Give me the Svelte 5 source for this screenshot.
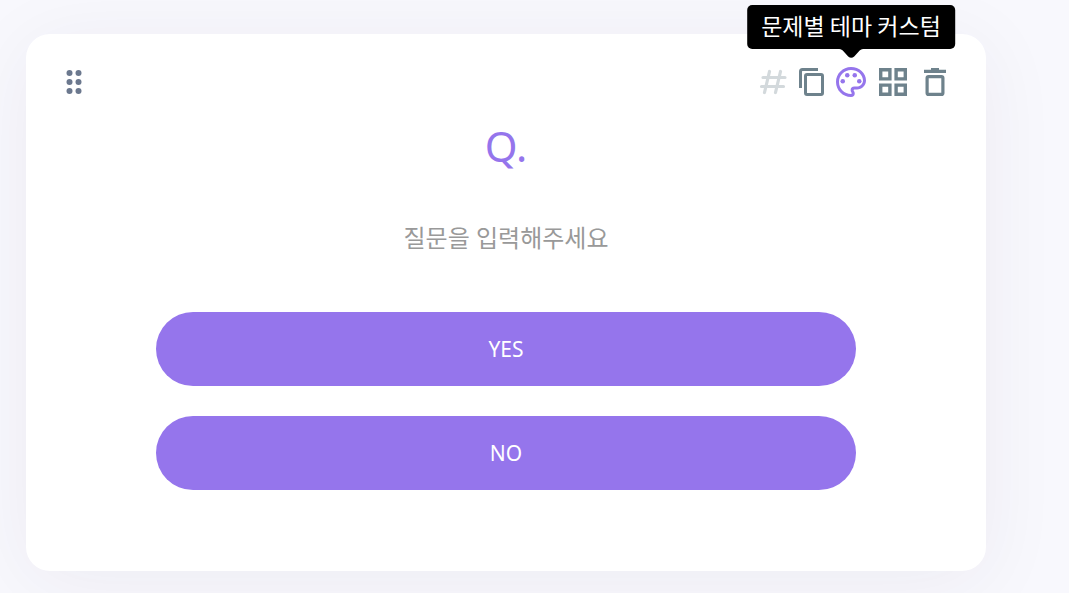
<script>
	let question = $state('');
	let answers = ['YES', 'NO'];
	let dots = [6, 15, 24];
</script>

<main class="editor">
	<section class="card">
		<header class="card__header">
			<button class="tool tool--handle" type="button" aria-label="이동">
				<svg viewBox="0 0 30 30" width="30" height="30" fill="currentColor">
					{#each dots as y}
						<circle cx="10.5" cy={y} r="3" />
						<circle cx="19.5" cy={y} r="3" />
					{/each}
				</svg>
			</button>

			<div class="tools">
				<button class="tool tool--muted" type="button" aria-label="번호">
					<svg viewBox="0 0 30 36" width="30" height="36" fill="none" stroke="currentColor" stroke-width="3.2" stroke-linejoin="round" stroke-linecap="round">
						<path d="M11.500 7.500 6.500 28.500M22.500 7.500l-5 21M5 13.500h22M3.500 22.500h22" />
					</svg>
				</button>
				<button class="tool" type="button" aria-label="복사">
					<svg viewBox="0 0 33 36" width="33" height="36" fill="none" stroke="currentColor" stroke-width="3">
						<path d="M6.500 24V7.500a2 2 0 0 1 2-2H24" />
						<rect x="11.500" y="10.500" width="17" height="20" rx="1.500" />
					</svg>
				</button>
				<div class="tool-wrap">
					<button class="tool tool--active" type="button" aria-label="테마" aria-describedby="theme-tip">
						<svg viewBox="0 0 24 24" width="36" height="36" fill="currentColor">
							<path d="M12 22C6.49 22 2 17.51 2 12S6.49 2 12 2s10 4.04 10 9c0 3.31-2.69 6-6 6h-1.77c-.28 0-.5.22-.5.5 0 .12.05.23.13.33.41.47.64 1.06.64 1.67A2.5 2.5 0 0 1 12 22zm0-18c-4.41 0-8 3.59-8 8s3.59 8 8 8c.28 0 .5-.22.5-.5a.54.54 0 0 0-.14-.35c-.41-.46-.63-1.05-.63-1.65a2.5 2.5 0 0 1 2.5-2.5H16c2.21 0 4-1.79 4-4 0-3.86-3.59-7-8-7z" />
							<circle cx="6.5" cy="11.5" r="1.5" />
							<circle cx="9.5" cy="7.5" r="1.5" />
							<circle cx="14.5" cy="7.5" r="1.5" />
							<circle cx="17.5" cy="11.5" r="1.5" />
						</svg>
					</button>
					<div class="tooltip" id="theme-tip" role="tooltip">
						문제별 테마 커스텀
						<svg class="tooltip__arrow" viewBox="0 0 24 9" width="24" height="9" fill="currentColor">
							<path d="M0 0h24c-2 0-3 1-4 2l-5 5.500q-3 2.500-6 0L4 2C3 1 2 0 0 0z" />
						</svg>
					</div>
				</div>
				<button class="tool" type="button" aria-label="레이아웃">
					<svg viewBox="0 0 36 36" width="36" height="36" fill="none" stroke="currentColor" stroke-width="3.4">
						<path d="M5.700 5.700h9.200v9.200H5.700zM21.100 5.700h9.200v9.200h-9.200zM5.700 21.100h9.200v9.200H5.700zM21.100 21.100h9.200v9.200h-9.200z" />
					</svg>
				</button>
				<button class="tool" type="button" aria-label="삭제">
					<svg viewBox="0 0 36 36" width="36" height="36" fill="none" stroke="currentColor" stroke-width="3.2">
						<rect x="10.100" y="12.600" width="15.800" height="17.800" rx="1.500" />
						<path d="M7 7.400h22M14 5.600h8" />
					</svg>
				</button>
			</div>
		</header>

		<label class="number" for="question">Q.</label>
		<input class="question" id="question" type="text" placeholder="질문을 입력해주세요" bind:value={question} />

		<div class="answers">
			{#each answers as answer}
				<button class="answer" type="button">{answer}</button>
			{/each}
		</div>
	</section>
</main>

<style>
	:global(body) {
		background: #f8f8fd;
		font-family: 'Noto Sans', 'Noto Sans CJK KR', sans-serif;
	}

	.editor {
		display: flow-root;
		min-height: 100vh;
		box-sizing: border-box;
		padding: 34px 83px 22px 26px;
		overflow: hidden;
	}

	.card {
		display: flex;
		flex-direction: column;
		align-items: center;
		box-sizing: border-box;
		padding: 30px 33px 81px;
		border-radius: 24px;
		background: #fff;
		box-shadow: 0 10px 80px rgba(50, 40, 60, 0.06);
	}

	.card__header {
		display: flex;
		align-items: center;
		justify-content: space-between;
		align-self: stretch;
	}

	.tools {
		display: flex;
		align-items: center;
		gap: 6px;
	}

	.tool {
		display: block;
		padding: 0;
		border: 0;
		background: none;
		color: #6e828c;
		cursor: pointer;
	}

	.tool svg {
		display: block;
	}

	.tool--handle {
		color: #6b788e;
		cursor: grab;
	}

	.tool--muted {
		color: #d3d9dc;
	}

	.tool--active {
		color: #9575ec;
	}

	.tool-wrap {
		position: relative;
	}

	.tooltip {
		position: absolute;
		bottom: 100%;
		left: 50%;
		margin-bottom: 15px;
		padding: 0 14px 4px;
		border-radius: 5px;
		background: #000;
		color: #fff;
		font-family: 'Noto Sans CJK KR', sans-serif;
		font-size: 23px;
		line-height: 40px;
		white-space: nowrap;
		transform: translateX(-50%);
	}

	.tooltip__arrow {
		position: absolute;
		top: 100%;
		left: 50%;
		margin-left: -12px;
		color: #000;
	}

	.number {
		margin-top: 22px;
		color: #9575ec;
		font-size: 42px;
		line-height: 48px;
	}

	.question {
		width: 100%;
		max-width: 700px;
		height: 36px;
		box-sizing: border-box;
		margin-top: 49px;
		padding: 0;
		border: 0;
		outline: 0;
		background: none;
		color: #333;
		font-family: inherit;
		font-size: 24px;
		text-align: center;
	}

	.question::placeholder {
		color: #999;
		opacity: 1;
	}

	.answers {
		display: flex;
		flex-direction: column;
		gap: 30px;
		width: 100%;
		max-width: 700px;
		margin-top: 57px;
	}

	.answer {
		height: 74px;
		padding: 0 24px;
		border: 0;
		border-radius: 37px;
		background: #9575ec;
		color: #fff;
		font-family: inherit;
		font-size: 21px;
		cursor: pointer;
	}
</style>
